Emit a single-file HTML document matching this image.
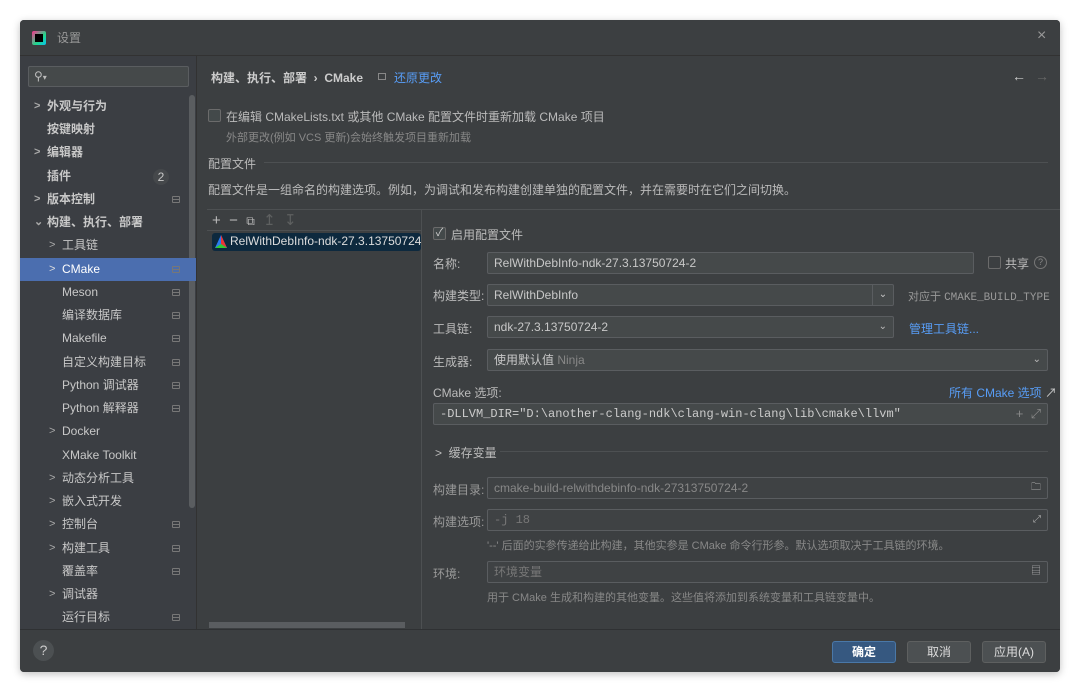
<!DOCTYPE html>
<html><head><meta charset="utf-8"><style>
*{box-sizing:border-box;margin:0;padding:0}
body{width:1080px;height:692px;background:#fff;font-family:"Liberation Sans","Noto Sans CJK SC",sans-serif;font-size:12px;color:#bbbbbb;position:relative;overflow:hidden}
.a{position:absolute}
#dlg{left:20px;top:20px;width:1040px;height:652px;background:#3c3f41;border-radius:4px;box-shadow:0 2px 8px rgba(0,0,0,.25);overflow:hidden}
.si{position:absolute;left:0;width:176px;height:23px;line-height:23px;font-size:12px;color:#c8c8c8}
.si .ch{position:absolute;font-size:11px;color:#aaa}
.b{font-weight:bold}
.pin{position:absolute;left:152px;top:8px;width:8px;height:7px;border:1px solid #777;border-radius:1px}
.pin:after{content:"";position:absolute;left:0;right:0;top:2px;border-top:1px solid #777}
.inp{position:absolute;background:#45494a;border:1px solid #5a5d60;border-radius:2px;height:22px;line-height:20px;padding-left:6px;color:#c8c8c8}
.lab{position:absolute;left:413px;color:#bbb}
.dd{position:absolute;right:6px;top:0;color:#bbb;font-size:10px}
.btn{position:absolute;top:621px;height:22px;line-height:20px;width:64px;text-align:center;border:1px solid #5e6060;background:#4c5052;border-radius:3px;color:#ddd}
.mono{font-family:"Liberation Mono","DejaVu Sans Mono",monospace}
</style></head><body>
<div id="dlg" class="a">
 <div class="a" style="left:0;top:0;width:1040px;height:36px;background:#3c3f41;border-bottom:1px solid #323232"></div>
 <div class="a" style="left:12px;top:11px;width:14px;height:14px;background:linear-gradient(135deg,#ff318c,#21d789 60%,#07c3f2);border-radius:2px"><div class="a" style="left:3px;top:3px;width:8px;height:8px;background:#000"></div></div>
 <div class="a" style="left:37px;top:9px;color:#999">设置</div>
 <div class="a" style="left:1017px;top:7px;color:#999;font-size:16px">×</div>
 <div class="a" style="left:0;top:36px;width:177px;height:574px;background:#3b3e43;border-right:1px solid #323232"></div>
 <div class="a" style="left:8px;top:46px;width:161px;height:21px;border:1px solid #5a5d60;background:#45494a;border-radius:2px"></div>
 <div class="a" style="left:14px;top:49px;color:#bbb;font-size:12px">&#9906;<span style="font-size:8px">▾</span></div>
 <div class="a" style="left:169px;top:75px;width:6px;height:413px;background:#5a5d60;border-radius:3px"></div>
 <div class="a" style="left:0;top:238px;width:176px;height:23px;background:#4b6eaf"></div>
 <div class="a" style="left:0;top:75px">
  <div class="si b" style="top:0"><span class="ch" style="left:14px">&gt;</span><span style="margin-left:27px">外观与行为</span></div>
  <div class="si b" style="top:23px"><span style="margin-left:27px">按键映射</span></div>
  <div class="si b" style="top:46px"><span class="ch" style="left:14px">&gt;</span><span style="margin-left:27px">编辑器</span></div>
  <div class="si b" style="top:70px"><span style="margin-left:27px">插件</span><span class="a" style="left:133px;top:4px;width:16px;height:16px;line-height:16px;text-align:center;border-radius:50%;background:#45484b;font-weight:normal">2</span></div>
  <div class="si b" style="top:93px"><span class="ch" style="left:14px">&gt;</span><span style="margin-left:27px">版本控制</span><span class="pin"></span></div>
  <div class="si b" style="top:116px"><span class="ch" style="left:14px">⌄</span><span style="margin-left:27px">构建、执行、部署</span></div>
  <div class="si" style="top:139px"><span class="ch" style="left:29px">&gt;</span><span style="margin-left:42px">工具链</span></div>
  <div class="si" style="top:163px;color:#fff"><span class="ch" style="left:29px;color:#ddd">&gt;</span><span style="margin-left:42px">CMake</span><span class="pin"></span></div>
  <div class="si" style="top:186px"><span style="margin-left:42px">Meson</span><span class="pin"></span></div>
  <div class="si" style="top:209px"><span style="margin-left:42px">编译数据库</span><span class="pin"></span></div>
  <div class="si" style="top:232px"><span style="margin-left:42px">Makefile</span><span class="pin"></span></div>
  <div class="si" style="top:256px"><span style="margin-left:42px">自定义构建目标</span><span class="pin"></span></div>
  <div class="si" style="top:279px"><span style="margin-left:42px">Python 调试器</span><span class="pin"></span></div>
  <div class="si" style="top:302px"><span style="margin-left:42px">Python 解释器</span><span class="pin"></span></div>
  <div class="si" style="top:325px"><span class="ch" style="left:29px">&gt;</span><span style="margin-left:42px">Docker</span></div>
  <div class="si" style="top:349px"><span style="margin-left:42px">XMake Toolkit</span></div>
  <div class="si" style="top:372px"><span class="ch" style="left:29px">&gt;</span><span style="margin-left:42px">动态分析工具</span></div>
  <div class="si" style="top:395px"><span class="ch" style="left:29px">&gt;</span><span style="margin-left:42px">嵌入式开发</span></div>
  <div class="si" style="top:418px"><span class="ch" style="left:29px">&gt;</span><span style="margin-left:42px">控制台</span><span class="pin"></span></div>
  <div class="si" style="top:442px"><span class="ch" style="left:29px">&gt;</span><span style="margin-left:42px">构建工具</span><span class="pin"></span></div>
  <div class="si" style="top:465px"><span style="margin-left:42px">覆盖率</span><span class="pin"></span></div>
  <div class="si" style="top:488px"><span class="ch" style="left:29px">&gt;</span><span style="margin-left:42px">调试器</span></div>
  <div class="si" style="top:511px"><span style="margin-left:42px">运行目标</span><span class="pin"></span></div>
 </div>
 <div class="a b" style="left:191px;top:49px;color:#ccc">构建、执行、部署 &nbsp;›&nbsp; CMake</div>
 <div class="a" style="left:358px;top:53px;width:8px;height:7px;border:1px solid #888"></div>
 <div class="a" style="left:374px;top:49px;color:#589df6">还原更改</div>
 <div class="a" style="left:992px;top:48px;color:#ccc;font-size:14px">←</div>
 <div class="a" style="left:1015px;top:48px;color:#666;font-size:14px">→</div>
 <div class="a" style="left:188px;top:89px;width:13px;height:13px;border:1px solid #6b6b6b;border-radius:2px;background:#43494a"></div>
 <div class="a" style="left:206px;top:88px">在编辑 CMakeLists.txt 或其他 CMake 配置文件时重新加载 CMake 项目</div>
 <div class="a" style="left:206px;top:109px;color:#888;font-size:11px">外部更改(例如 VCS 更新)会始终触发项目重新加载</div>
 <div class="a" style="left:188px;top:135px">配置文件</div>
 <div class="a" style="left:244px;top:142px;width:784px;border-top:1px solid #4d5052"></div>
 <div class="a" style="left:188px;top:161px">配置文件是一组命名的构建选项。例如，为调试和发布构建创建单独的配置文件，并在需要时在它们之间切换。</div>
 <div class="a" style="left:187px;top:189px;width:853px;height:421px;border-top:1px solid #4d5052"></div>
 <div class="a" style="left:401px;top:189px;width:1px;height:421px;background:#4d5052"></div>
 <div class="a" style="left:192px;top:191px;color:#bbb;font-size:15px">+ &nbsp;− &nbsp;<span style="font-size:12px">⧉</span> &nbsp;<span style="color:#5e6060">↥ &nbsp;↧</span></div>
 <div class="a" style="left:187px;top:210px;width:214px;height:1px;background:#4d5052"></div>
 <div class="a" style="left:192px;top:213px;width:209px;height:18px;background:#0d293e;border-radius:3px"></div>
 <svg class="a" style="left:195px;top:215px" width="12" height="13"><polygon points="6,0 12,13 0,13" fill="#2b7bf0"/><polygon points="6,0 12,13 6,9" fill="#e33"/><polygon points="0,13 12,13 6,9" fill="#3c3"/></svg>
 <div class="a" style="left:210px;top:214px;color:#ddd;white-space:nowrap;width:191px;overflow:hidden">RelWithDebInfo-ndk-27.3.13750724-2</div>
 <div class="a" style="left:189px;top:602px;width:196px;height:6px;background:#5a5d60"></div>
 <div class="a" style="left:413px;top:207px;width:13px;height:13px;border:1px solid #6b6b6b;border-radius:2px;background:#43494a;font-size:11px;line-height:11px;text-align:center;color:#ccc">✓</div>
 <div class="a" style="left:431px;top:206px">启用配置文件</div>
 <div class="lab" style="top:235px">名称:</div>
 <div class="inp" style="left:467px;top:232px;width:487px">RelWithDebInfo-ndk-27.3.13750724-2</div>
 <div class="a" style="left:968px;top:236px;width:13px;height:13px;border:1px solid #6b6b6b;border-radius:2px"></div>
 <div class="a" style="left:985px;top:235px">共享</div>
 <div class="a" style="left:1014px;top:236px;width:13px;height:13px;border:1px solid #777;border-radius:50%;font-size:9px;line-height:11px;text-align:center;color:#888">?</div>
 <div class="lab" style="top:267px">构建类型:</div>
 <div class="inp" style="left:467px;top:264px;width:407px">RelWithDebInfo<div class="a" style="right:0;top:0;width:21px;height:20px;border-left:1px solid #5a5d60;text-align:center;font-size:10px">⌄</div></div>
 <div class="a" style="left:888px;top:268px;color:#999;font-size:11px">对应于 <span class="mono">CMAKE_BUILD_TYPE</span></div>
 <div class="lab" style="top:300px">工具链:</div>
 <div class="inp" style="left:467px;top:296px;width:407px">ndk-27.3.13750724-2<span class="dd">⌄</span></div>
 <div class="a" style="left:889px;top:300px;color:#589df6">管理工具链...</div>
 <div class="lab" style="top:333px">生成器:</div>
 <div class="inp" style="left:467px;top:329px;width:561px">使用默认值 <span style="color:#888">Ninja</span><span class="dd">⌄</span></div>
 <div class="lab" style="top:364px">CMake 选项:</div>
 <div class="a" style="left:929px;top:364px;color:#589df6">所有 CMake 选项 <span style="color:#ccc">↗</span></div>
 <div class="inp mono" style="left:413px;top:383px;width:615px;font-size:12px;color:#ccc">-DLLVM_DIR="D:\another-clang-ndk\clang-win-clang\lib\cmake\llvm"<span class="dd" style="font-family:Liberation Sans;font-size:13px;color:#888">+ &nbsp;⤢</span></div>
 <div class="a" style="left:415px;top:424px">&gt;&nbsp; 缓存变量</div>
 <div class="a" style="left:480px;top:431px;width:548px;border-top:1px solid #4d5052"></div>
 <div class="lab" style="top:461px;color:#999">构建目录:</div>
 <div class="inp" style="left:467px;top:457px;width:561px;color:#888;background:#3f4244">cmake-build-relwithdebinfo-ndk-27313750724-2<span class="dd" style="color:#aaa">🗀</span></div>
 <div class="lab" style="top:493px;color:#999">构建选项:</div>
 <div class="inp mono" style="left:467px;top:489px;width:561px;color:#777;background:#3f4244">-j 18<span class="dd" style="font-family:Liberation Sans;color:#aaa">⤢</span></div>
 <div class="a" style="left:467px;top:517px;color:#888;font-size:11px">'--' 后面的实参传递给此构建，其他实参是 CMake 命令行形参。默认选项取决于工具链的环境。</div>
 <div class="lab" style="top:545px;color:#999">环境:</div>
 <div class="inp" style="left:467px;top:541px;width:561px;color:#777;background:#3f4244">环境变量<span class="dd" style="color:#aaa">▤</span></div>
 <div class="a" style="left:467px;top:569px;color:#888;font-size:11px">用于 CMake 生成和构建的其他变量。这些值将添加到系统变量和工具链变量中。</div>
 <div class="a" style="left:0;top:609px;width:1040px;height:43px;background:#3c3f41;border-top:1px solid #2f3133"></div>
 <div class="a" style="left:13px;top:620px;width:21px;height:21px;border-radius:50%;background:#4c5052;text-align:center;line-height:21px;color:#ccc;font-size:14px">?</div>
 <div class="btn" style="left:812px;background:#365880;border-color:#4a78a8;color:#fff;font-weight:bold">确定</div>
 <div class="btn" style="left:887px">取消</div>
 <div class="btn" style="left:962px">应用(A)</div>
</div>
</body></html>
